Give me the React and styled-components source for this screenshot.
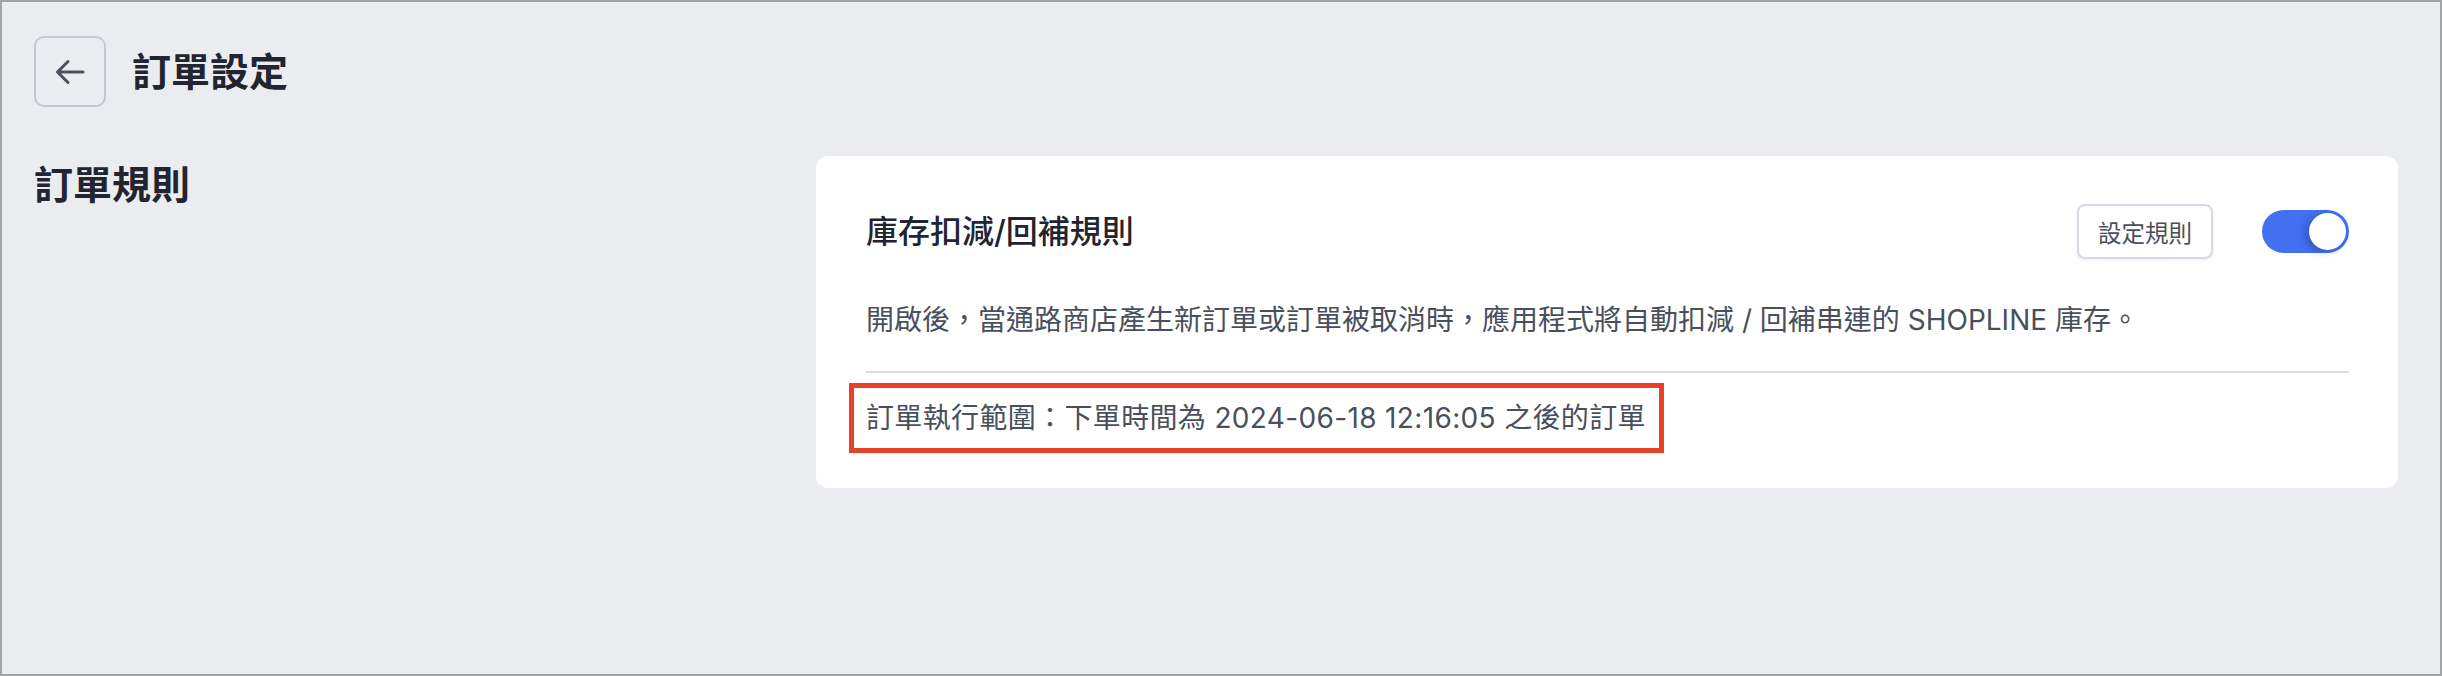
import styled, { createGlobalStyle } from "styled-components";

const GlobalStyle = createGlobalStyle`
  html, body {
    margin: 0;
    padding: 0;
    background: #ebecf0;
  }
  * {
    box-sizing: border-box;
  }
`;

const FONT = `Inter, "Noto Sans CJK TC", "Noto Sans", sans-serif`;

export default function App() {
  return (
    <>
      <GlobalStyle />
      <Frame>
        <PageHeader>
          <BackButton aria-label="返回">
            <svg width="30" height="26" viewBox="0 0 30 26" fill="none">
              <path
                d="M28 13H3M13 2.5L2.5 13L13 23.5"
                stroke="#4b505c"
                strokeWidth="3"
                strokeLinecap="round"
                strokeLinejoin="round"
              />
            </svg>
          </BackButton>
          <PageTitle>訂單設定</PageTitle>
        </PageHeader>

        <Section>
          <SectionLabel>訂單規則</SectionLabel>
          <Card>
            <CardHeader>
              <CardTitle>庫存扣減/回補規則</CardTitle>
              <Actions>
                <OutlineButton>設定規則</OutlineButton>
                <Toggle $on>
                  <Knob $on />
                </Toggle>
              </Actions>
            </CardHeader>
            <Description>
              開啟後，當通路商店產生新訂單或訂單被取消時，應用程式將自動扣減 / 回補串連的 SHOPLINE 庫存。
            </Description>
            <Divider />
            <Highlight>
              <ScopeText>訂單執行範圍：下單時間為 2024-06-18 12:16:05 之後的訂單</ScopeText>
            </Highlight>
          </Card>
        </Section>
      </Frame>
    </>
  );
}

const Frame = styled.div`
  width: 2442px;
  height: 676px;
  border: 2px solid #a2a3a7;
  background: #ebecf0;
  padding: 34px 42px 0 32px;
  font-family: ${FONT};
  color: #22252f;
`;

const PageHeader = styled.div`
  display: flex;
  align-items: center;
  gap: 26px;
`;

const BackButton = styled.button`
  width: 72px;
  height: 71px;
  display: flex;
  align-items: center;
  justify-content: center;
  background: transparent;
  border: 2px solid #c3c8d2;
  border-radius: 10px;
  padding: 0;
`;

const PageTitle = styled.h1`
  margin: 0;
  font-size: 39px;
  font-weight: 700;
  line-height: 56px;
  color: #22252f;
`;

const Section = styled.div`
  display: grid;
  grid-template-columns: 782px 1fr;
  align-items: start;
  margin-top: 49px;
`;

const SectionLabel = styled.h2`
  margin: 0;
  font-size: 39px;
  font-weight: 700;
  line-height: 58px;
  color: #22252f;
`;

const Card = styled.div`
  background: #ffffff;
  border-radius: 12px;
  padding: 48px 49px 35px 50px;
`;

const CardHeader = styled.div`
  display: flex;
  align-items: center;
  justify-content: space-between;
`;

const CardTitle = styled.h3`
  margin: 0;
  font-size: 32px;
  font-weight: 500;
  line-height: 44px;
  color: #22252f;
`;

const Actions = styled.div`
  display: flex;
  align-items: center;
  gap: 49px;
`;

const OutlineButton = styled.button`
  height: 55px;
  padding: 0 19px;
  background: #ffffff;
  border: 2px solid #d7dae4;
  border-radius: 8px;
  box-shadow: 0 2px 4px rgba(30, 40, 70, 0.06);
  font-family: ${FONT};
  font-size: 23.5px;
  color: #4a4f5c;
`;

const Toggle = styled.div`
  width: 87px;
  height: 43px;
  border-radius: 22px;
  padding: 3px;
  display: flex;
  justify-content: ${(p) => (p.$on ? "flex-end" : "flex-start")};
  background: ${(p) => (p.$on ? "#4270f1" : "#c9cdd6")};
`;

const Knob = styled.div`
  width: 37px;
  height: 37px;
  border-radius: 50%;
  background: #ffffff;
  box-shadow: -4px 2px 7px rgba(20, 30, 80, 0.28);
`;

const Description = styled.p`
  margin: 41px 0 0;
  font-size: 28px;
  line-height: 40px;
  color: #4a4f5c;
`;

const Divider = styled.hr`
  margin: 31px 0 0;
  border: none;
  height: 2px;
  background: #dadde6;
`;

const Highlight = styled.div`
  display: inline-block;
  margin: 10px 0 0 -17px;
  padding: 10px 13px 10px 12px;
  border: 5px solid #e8412a;
`;

const ScopeText = styled.span`
  display: block;
  font-size: 28px;
  line-height: 40px;
  letter-spacing: 0.35px;
  color: #4a4f5c;
`;
